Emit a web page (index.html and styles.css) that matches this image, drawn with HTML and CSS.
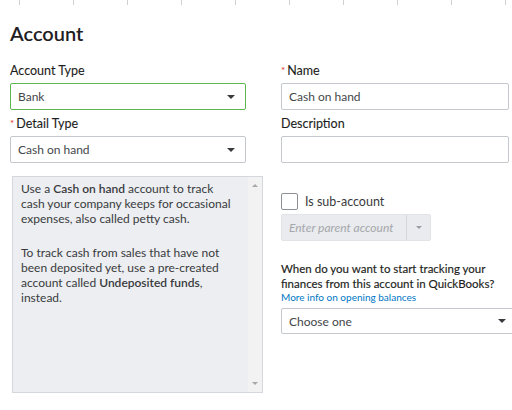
FILE: index.html
```html
<!DOCTYPE html>
<html lang="en">
<head>
<meta charset="utf-8">
<title>Account</title>
<link rel="stylesheet" href="styles.css">
</head>
<body>
<div class="ruler"><span></span><span></span><span></span><span></span><span></span><span></span><span></span><span></span><span></span><span></span></div>
<main class="page">
  <h1 class="title">Account</h1>
  <div class="cols">
    <div class="col col-left">
      <div class="field">
        <label class="label">Account Type</label>
        <div class="select select-focus"><span>Bank</span><span class="caret"></span></div>
      </div>
      <div class="field">
        <label class="label"><span class="req">*</span>Detail Type</label>
        <div class="select"><span>Cash on hand</span><span class="caret"></span></div>
      </div>
      <div class="help">
        <div class="help-text">
          <p>Use a <b>Cash on hand</b> account to track<br>cash your company keeps for occasional<br>expenses, also called petty cash.</p>
          <p>To track cash from sales that have not<br>been deposited yet, use a pre-created<br>account called <b>Undeposited funds</b>,<br>instead.</p>
        </div>
        <div class="scrollbar"><span class="sb-up"></span><span class="sb-down"></span></div>
      </div>
    </div>
    <div class="col col-right">
      <div class="field">
        <label class="label"><span class="req">*</span>Name</label>
        <div class="input">Cash on hand</div>
      </div>
      <div class="field">
        <label class="label">Description</label>
        <div class="input"></div>
      </div>
      <div class="check-row"><span class="checkbox"></span><span>Is sub-account</span></div>
      <div class="combo">
        <div class="combo-input">Enter parent account</div>
        <div class="combo-btn"><span class="caret caret-muted"></span></div>
      </div>
      <p class="question">When do you want to start tracking your<br>finances from this account in QuickBooks?</p>
      <a class="link" href="#">More info on opening balances</a>
      <div class="select select-wide"><span>Choose one</span><span class="caret"></span></div>
    </div>
  </div>
</main>
</body>
</html>
```

FILE: styles.css
```css
html, body {
  margin: 0;
  padding: 0;
}
html {
  overflow: hidden;
}
body {
  width: 512px;
  height: 410px;
  overflow: hidden;
  background: #ffffff;
  color: #393a3d;
  font-family: Lato, "Liberation Sans", sans-serif;
}

.ruler {
  display: flex;
  gap: 53px;
  padding-left: 19px;
  height: 5px;
}
.ruler span {
  flex: none;
  width: 1px;
  background: #cfd1d4;
}

.page {
  padding-left: 10px;
}
.title {
  margin: 16px 0 0;
  font-size: 20px;
  line-height: 24px;
  font-weight: 600;
  color: #1f2022;
}

.cols {
  display: flex;
  align-items: flex-start;
  gap: 35px;
  margin-top: 18px;
}
.col-left {
  flex: none;
  width: 236px;
}
.col-right {
  flex: none;
  width: 228px;
}

.field + .field {
  margin-top: 6px;
}
.label {
  display: block;
  margin-bottom: 4px;
  font-size: 12.5px;
  line-height: 16px;
  font-weight: 400;
  color: #1c1d20;
  -webkit-text-stroke: 0.1px #1c1d20;
}
.req {
  color: #e0301e;
  font-size: 10px;
  margin-right: 2px;
  position: relative;
  top: -1px;
  -webkit-text-stroke: 0;
}

.select,
.input {
  box-sizing: border-box;
  height: 27px;
  display: flex;
  align-items: center;
  padding: 0 7px;
  border: 1px solid #c4c7cc;
  border-radius: 2px;
  background: #ffffff;
  font-size: 12px;
  color: #44464a;
}
.select {
  justify-content: space-between;
}
.select-focus {
  border-color: #5cb84f;
}
.caret {
  width: 0;
  height: 0;
  margin-right: 3px;
  border-left: 4px solid transparent;
  border-right: 4px solid transparent;
  border-top: 4px solid #393a3d;
}
.caret-muted {
  margin-right: 0;
  border-left-width: 3px;
  border-right-width: 3px;
  border-top: 3px solid #9a9da2;
}

.help {
  box-sizing: border-box;
  display: flex;
  width: 251px;
  height: 217px;
  margin: 13px 0 0 2px;
  border: 1px solid #d4d7dc;
  background: #eceef1;
}
.help-text {
  flex: 1;
  padding: 4px 4px 0 8px;
  font-size: 12px;
  line-height: 15px;
  white-space: nowrap;
}
.help-text p {
  margin: 0;
}
.help-text p + p {
  margin-top: 19px;
}
.help-text b {
  font-weight: 600;
}
.scrollbar {
  flex: none;
  width: 14px;
  display: flex;
  flex-direction: column;
  justify-content: space-between;
  align-items: center;
  padding: 7px 0;
  background: #f2f2f3;
}
.sb-up {
  width: 0;
  height: 0;
  border-left: 3px solid transparent;
  border-right: 3px solid transparent;
  border-bottom: 3px solid #a6a8ab;
}
.sb-down {
  width: 0;
  height: 0;
  border-left: 3px solid transparent;
  border-right: 3px solid transparent;
  border-top: 3px solid #a6a8ab;
}

.check-row {
  display: flex;
  align-items: center;
  gap: 7px;
  height: 17px;
  margin-top: 30px;
  font-size: 12.5px;
}
.checkbox {
  box-sizing: border-box;
  width: 17px;
  height: 17px;
  border: 1px solid #8d9096;
  border-radius: 2px;
  background: #ffffff;
}

.combo {
  box-sizing: border-box;
  display: flex;
  width: 150px;
  height: 27px;
  margin-top: 4px;
  border: 1px solid #e1e3e6;
  border-radius: 2px;
  background: #e9ebee;
}
.combo-input {
  box-sizing: border-box;
  width: 125px;
  display: flex;
  align-items: center;
  padding-left: 7px;
  border-right: 1px solid #d4d7dc;
  color: #a5a7ab;
  font-size: 12px;
  font-style: italic;
}
.combo-btn {
  flex: 1;
  display: flex;
  align-items: center;
  justify-content: center;
}

.question {
  margin: 20px 0 0;
  font-size: 11.5px;
  line-height: 15px;
  font-weight: 400;
  color: #1c1d20;
  -webkit-text-stroke: 0.15px #1c1d20;
}
.link {
  display: block;
  font-size: 10px;
  line-height: 13px;
  color: #0077c5;
  text-decoration: none;
}
.select-wide {
  width: 236px;
  height: 26px;
  margin-top: 4px;
}
```
